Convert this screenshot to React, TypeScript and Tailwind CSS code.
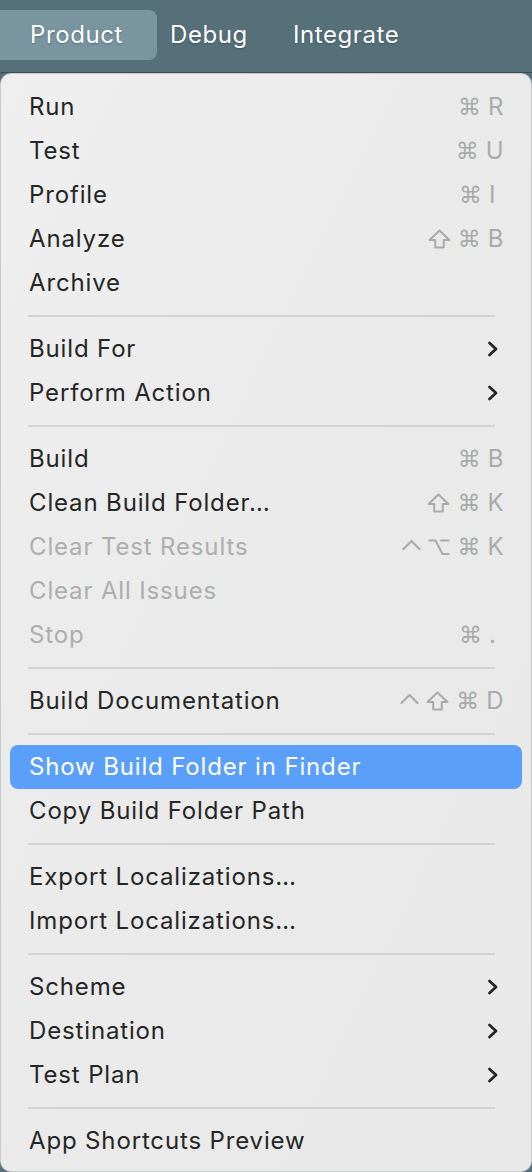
import React from "react";

type Item = {
  label: string;
  keys?: string[];
  disabled?: boolean;
  submenu?: boolean;
  active?: boolean;
};

type Group = Item[];

const groups: Group[] = [
  [
    { label: "Run", keys: ["cmd", "R"] },
    { label: "Test", keys: ["cmd", "U"] },
    { label: "Profile", keys: ["cmd", "I"] },
    { label: "Analyze", keys: ["shift", "cmd", "B"] },
    { label: "Archive" },
  ],
  [
    { label: "Build For", submenu: true },
    { label: "Perform Action", submenu: true },
  ],
  [
    { label: "Build", keys: ["cmd", "B"] },
    { label: "Clean Build Folder…", keys: ["shift", "cmd", "K"] },
    { label: "Clear Test Results", keys: ["ctrl", "opt", "cmd", "K"], disabled: true },
    { label: "Clear All Issues", disabled: true },
    { label: "Stop", keys: ["cmd", "."], disabled: true },
  ],
  [{ label: "Build Documentation", keys: ["ctrl", "shift", "cmd", "D"] }],
  [
    { label: "Show Build Folder in Finder", active: true },
    { label: "Copy Build Folder Path" },
  ],
  [
    { label: "Export Localizations…" },
    { label: "Import Localizations…" },
  ],
  [
    { label: "Scheme", submenu: true },
    { label: "Destination", submenu: true },
    { label: "Test Plan", submenu: true },
  ],
  [{ label: "App Shortcuts Preview" }],
];

const Chevron = () => (
  <svg width="16" height="18" viewBox="0 0 16 18" className="mr-[3px]">
    <path d="M4.5 3 L11 9 L4.5 15" fill="none" stroke="#262626" strokeWidth="2.8" strokeLinecap="round" strokeLinejoin="round" />
  </svg>
);

const Symbol: React.FC<{ name: string }> = ({ name }) => {
  if (name === "shift")
    return (
      <svg width="23" height="20" viewBox="0 0 23 20">
        <path d="M11.5 1.5 L21.5 11 L15.8 11 L15.8 18.5 L7.2 18.5 L7.2 11 L1.5 11 Z" fill="none" stroke="#a9aaaa" strokeWidth="2" strokeLinejoin="round" />
      </svg>
    );
  if (name === "ctrl")
    return (
      <svg width="19" height="20" viewBox="0 0 19 20">
        <path d="M1.5 12 L9.5 4 L17.5 12" fill="none" stroke="#a9aaaa" strokeWidth="2.2" strokeLinecap="round" strokeLinejoin="round" />
      </svg>
    );
  if (name === "opt")
    return (
      <svg width="22" height="20" viewBox="0 0 22 20">
        <path d="M1.5 3.5 L7.5 3.5 L14.5 17 L20.5 17 M13 3.5 L20.5 3.5" fill="none" stroke="#a9aaaa" strokeWidth="2" strokeLinecap="round" strokeLinejoin="round" />
      </svg>
    );
  return <span className="font-['DejaVu_Sans',sans-serif] text-[23px] leading-none">⌘</span>;
};

const Keys: React.FC<{ keys: string[] }> = ({ keys }) => (
  <div className="flex items-center gap-[7px] text-[#a9aaaa]">
    {keys.map((k, i) =>
      k.length > 1 ? (
        <Symbol key={i} name={k} />
      ) : (
        <span key={i} className="text-[24px] min-w-[15px] tracking-[0.5px]">
          {k}
        </span>
      )
    )}
  </div>
);

const MenuRow: React.FC<{ item: Item }> = ({ item }) => {
  const color = item.active ? "text-white" : item.disabled ? "text-[#adaeae]" : "text-[#252626]";
  return (
    <div
      className={`mx-[9px] h-[44px] flex items-center justify-between pl-[19px] pr-[18px] rounded-[8px] ${
        item.active ? "bg-[#5aa0fb]" : ""
      }`}
    >
      <span className={`text-[24px] tracking-[0.85px] ${color}`}>{item.label}</span>
      {item.keys && <Keys keys={item.keys} />}
      {item.submenu && <Chevron />}
    </div>
  );
};

export default function App() {
  return (
    <div className="w-[532px] h-[1172px] bg-[#56707a] overflow-hidden font-['Inter','Liberation_Sans',sans-serif]">
      {/* menu bar */}
      <div className="h-[73px] flex items-start pt-[10px] border-b border-[#3b4c53] text-white text-[24px] tracking-[0.6px]">
        <div className="h-[50px] w-[157px] bg-[#7895a0] rounded-r-[8px] flex items-center pl-[30px] [text-shadow:0_1px_2px_rgba(0,0,0,0.25)]">
          Product
        </div>
        <div className="h-[50px] flex items-center ml-[13px] [text-shadow:0_1px_2px_rgba(0,0,0,0.25)]">Debug</div>
        <div className="h-[50px] flex items-center ml-[45px] [text-shadow:0_1px_2px_rgba(0,0,0,0.25)]">Integrate</div>
      </div>

      {/* dropdown */}
      <div className="h-[1099px] bg-gradient-to-br from-[#eeefee] via-[#e9eae9] to-[#e8e9e8] rounded-[11px] border border-[#c8caca] pt-[11px] pb-[9px]">
        {groups.map((group, gi) => (
          <div key={gi}>
            {gi > 0 && (
              <div className="h-[22px] flex items-center">
                <div className="ml-[27px] mr-[36px] h-[2px] flex-1 bg-[#d2d3d3]" />
              </div>
            )}
            {group.map((item) => (
              <MenuRow key={item.label} item={item} />
            ))}
          </div>
        ))}
      </div>
    </div>
  );
}
